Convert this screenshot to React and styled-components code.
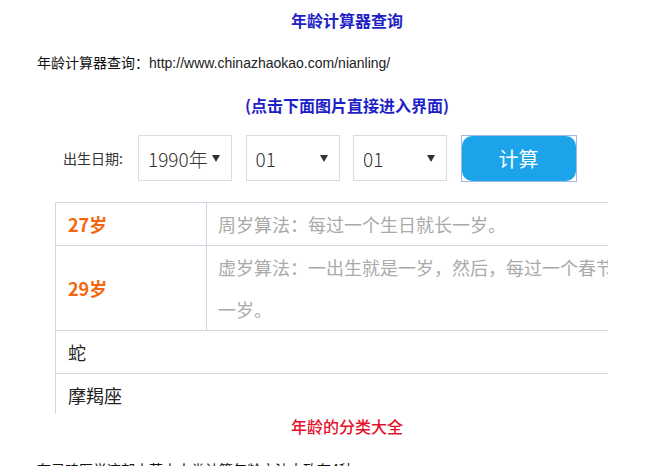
import styled, { createGlobalStyle } from 'styled-components';

const GlobalStyle = createGlobalStyle`
  html, body {
    margin: 0;
    padding: 0;
    background: #fff;
  }
  body {
    font-family: "Noto Sans CJK SC", sans-serif;
    color: #222;
  }
`;

const years = ['1990年', '01', '01'];

function App() {
  return (
    <Page>
      <GlobalStyle />
      <Title>年龄计算器查询</Title>
      <Para>
        年龄计算器查询：<Url>http://www.chinazhaokao.com/nianling/</Url>
      </Para>
      <Title $gap={18}>(点击下面图片直接进入界面)</Title>
      <CalcRow>
        <Label>出生日期:</Label>
        {years.map((v, i) => (
          <Select key={i}>
            <span>{v}</span>
            <Arrow />
          </Select>
        ))}
        <ButtonFrame>
          <CalcButton>计算</CalcButton>
        </ButtonFrame>
      </CalcRow>
      <TableClip>
        <Table>
          <colgroup>
            <col style={{ width: 151 }} />
            <col style={{ width: 470 }} />
          </colgroup>
          <tbody>
            <tr>
              <AgeCell>27岁</AgeCell>
              <NoteCell>周岁算法：每过一个生日就长一岁。</NoteCell>
            </tr>
            <tr>
              <AgeCell>29岁</AgeCell>
              <NoteCell>虚岁算法：一出生就是一岁，然后，每过一个春节就长一岁。</NoteCell>
            </tr>
            <tr>
              <PlainCell colSpan={2}>蛇</PlainCell>
            </tr>
            <tr>
              <PlainCell colSpan={2}>摩羯座</PlainCell>
            </tr>
          </tbody>
        </Table>
      </TableClip>
      <RedTitle>年龄的分类大全</RedTitle>
      <Para $gap={19}>在灵魂医学这部古著中人类计算年龄方法大致有4种：</Para>
    </Page>
  );
}

export default App;

const Page = styled.div`
  width: 620px;
  padding-left: 37px;
  height: 466px;
  overflow: hidden;
`;

const Title = styled.div`
  margin-top: ${p => p.$gap ?? 8}px;
  text-align: center;
  font-size: 16px;
  font-weight: 700;
  line-height: 24px;
  color: #1f1fc8;
`;

const RedTitle = styled.div`
  text-align: center;
  font-size: 16px;
  font-weight: 500;
  line-height: 24px;
  color: #e5102b;
`;

const Para = styled.div`
  margin-top: ${p => p.$gap ?? 18}px;
  font-size: 14px;
  line-height: 24px;
  color: #111;
  white-space: nowrap;
`;

const Url = styled.span`
  font-family: "Liberation Sans", Arial, sans-serif;
  color: #222;
`;

const CalcRow = styled.div`
  margin-top: 17px;
  height: 48px;
  padding-left: 26px;
  display: flex;
  align-items: center;
  gap: 13.5px;
`;

const Label = styled.span`
  width: 61.5px;
  font-size: 14px;
  color: #333;
  white-space: nowrap;
`;

const Select = styled.div`
  box-sizing: border-box;
  width: 94px;
  height: 46px;
  border: 1px solid #dcdcdc;
  background: #fff;
  display: flex;
  align-items: center;
  justify-content: space-between;
  padding: 0 11px 0 9px;
  font-size: 19px;
  font-weight: 300;
  color: #333;
`;

const Arrow = styled.span`
  flex-shrink: 0;
  width: 0;
  height: 0;
  border-left: 4px solid transparent;
  border-right: 4px solid transparent;
  border-top: 7px solid #333;
`;

const ButtonFrame = styled.div`
  box-sizing: border-box;
  width: 116px;
  height: 47px;
  border: 1px solid #a4b6e6;
  display: flex;
`;

const CalcButton = styled.button`
  flex: 1;
  border: none;
  border-radius: 10px;
  background: #1ba4e9;
  color: #fff;
  font-family: "Noto Sans CJK SC", sans-serif;
  font-size: 20px;
  padding: 0;
  cursor: pointer;
`;

const TableClip = styled.div`
  margin: 20px 0 0 18px;
  width: 553px;
  height: 212px;
  overflow: hidden;
`;

const Table = styled.table`
  border-collapse: collapse;
  table-layout: fixed;
  width: 621px;
  font-size: 18px;
  line-height: 42px;

  td {
    border: 1px solid #cdd6e1;
    vertical-align: middle;
  }
`;

const AgeCell = styled.td`
  padding: 0 0 0 12px;
  color: #f4650d;
  font-weight: 700;
`;

const NoteCell = styled.td`
  padding: 0 12px 0 11px;
  color: #aaa;
`;

const PlainCell = styled.td`
  padding: 0 0 0 12px;
  color: #222;
`;
